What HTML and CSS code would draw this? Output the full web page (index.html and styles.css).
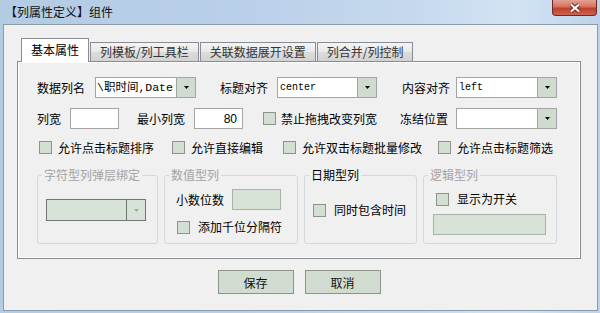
FILE: index.html
```html
<!DOCTYPE html>
<html>

<head>
    <meta charset="utf-8">
    <title>列属性定义</title>
    <link rel="stylesheet" href="styles.css">
</head>

<body>
    <div class="window">
        <div class="titlebar">
            <span class="title">【列属性定义】组件</span>
            <div class="close-btn">
                <svg width="14" height="10" viewBox="0 0 14 10">
                    <path d="M3 1.5 L11 8.5 M11 1.5 L3 8.5" stroke="#6a2f27" stroke-width="4" />
                    <path d="M3 1.5 L11 8.5 M11 1.5 L3 8.5" stroke="#fff" stroke-width="2" />
                </svg>
            </div>
        </div>
        <div class="client">
            <div class="tabs">
                <div class="tab active">基本属性</div>
                <div class="tab">列模板/列工具栏</div>
                <div class="tab">关联数据展开设置</div>
                <div class="tab">列合并/列控制</div>
            </div>
            <div class="panel">
                <!-- 第一行 -->
                <div class="row row-1">
                    <span class="lbl name-lbl">数据列名</span>
                    <div class="combo name-combo">
                        <span class="val wide">\职时间,Date</span>
                        <span class="drop"><svg width="5" height="3"><path d="M0 0h5L2.5 3z" /></svg></span>
                    </div>
                    <span class="lbl title-lbl">标题对齐</span>
                    <div class="combo title-combo">
                        <span class="val">center</span>
                        <span class="drop"><svg width="5" height="3"><path d="M0 0h5L2.5 3z" /></svg></span>
                    </div>
                    <span class="lbl align-lbl">内容对齐</span>
                    <div class="combo align-combo">
                        <span class="val">left</span>
                        <span class="drop"><svg width="5" height="3"><path d="M0 0h5L2.5 3z" /></svg></span>
                    </div>
                </div>
                <!-- 第二行 -->
                <div class="row row-2">
                    <span class="lbl width-lbl">列宽</span>
                    <input class="field width-input" type="text" value="">
                    <span class="lbl min-lbl">最小列宽</span>
                    <input class="field num min-input" type="text" value="80">
                    <span class="check drag-check"><span class="box"></span>禁止拖拽改变列宽</span>
                    <span class="lbl freeze-lbl">冻结位置</span>
                    <div class="combo freeze-combo">
                        <span class="val"></span>
                        <span class="drop"><svg width="5" height="3"><path d="M0 0h5L2.5 3z" /></svg></span>
                    </div>
                </div>
                <!-- 第三行 -->
                <div class="row row-3">
                    <span class="check"><span class="box"></span>允许点击标题排序</span>
                    <span class="check"><span class="box"></span>允许直接编辑</span>
                    <span class="check"><span class="box"></span>允许双击标题批量修改</span>
                    <span class="check"><span class="box"></span>允许点击标题筛选</span>
                </div>
                <!-- 分组 -->
                <div class="groups">
                    <fieldset class="group g-string">
                        <legend class="off">字符型列弹层绑定</legend>
                        <div class="combo disabled">
                            <span class="val"></span>
                            <span class="drop"><svg width="5" height="3"><path d="M0 0h5L2.5 3z" /></svg></span>
                        </div>
                    </fieldset>
                    <fieldset class="group g-number">
                        <legend class="off">数值型列</legend>
                        <div class="line">
                            <span class="lbl">小数位数</span>
                            <span class="field disabled"></span>
                        </div>
                        <span class="check"><span class="box"></span>添加千位分隔符</span>
                    </fieldset>
                    <fieldset class="group g-date">
                        <legend>日期型列</legend>
                        <span class="check"><span class="box"></span>同时包含时间</span>
                    </fieldset>
                    <fieldset class="group g-bool">
                        <legend class="off">逻辑型列</legend>
                        <span class="check"><span class="box"></span>显示为开关</span>
                        <span class="field disabled wide-box"></span>
                    </fieldset>
                </div>
            </div>
            <div class="actions">
                <button>保存</button>
                <button>取消</button>
            </div>
        </div>
    </div>
</body>

</html>
```

FILE: styles.css
```css
* {
    box-sizing: border-box;
}

body {
    margin: 0;
    font-family: "Noto Sans CJK SC", "Liberation Sans", sans-serif;
    font-size: 12px;
    color: #000;
    background: #bcd3eb;
}

.window {
    width: 600px;
    height: 313px;
    display: flex;
    flex-direction: column;
    padding: 0 2px 2px 3px;
    background: linear-gradient(90deg, #b4cbe4 0%, #bad0e9 40%, #c6d9ee 70%, #d3e3f4 86%, #bcd3eb 100%);
}

.titlebar {
    height: 24px;
    display: flex;
    justify-content: space-between;
    align-items: flex-start;
    padding-left: 2px;
}

.title {
    line-height: 24px;
    color: #111;
}

.close-btn {
    width: 45px;
    height: 16px;
    margin-right: 1px;
    border: 1px solid #6b2a22;
    border-top: none;
    border-radius: 0 0 4px 4px;
    background: linear-gradient(#e3a193 0%, #d5735f 45%, #c03e2c 55%, #cc6450 100%);
    display: flex;
    align-items: center;
    justify-content: center;
}

.client {
    flex: 1;
    border: 1px solid #8c9aa8;
    background: #f0f0f0;
    padding: 13px 0 0 13px;
}

/* 选项卡 */
.tabs {
    height: 23px;
    display: flex;
    align-items: flex-end;
    padding-left: 4px;
}

.tab {
    height: 19px;
    padding: 0 9px;
    margin-left: 1px;
    line-height: 17px;
    color: #333;
    border: 1px solid #898c95;
    border-bottom: none;
    background: linear-gradient(#f4f4f4 0%, #e8e8e8 50%, #dcdcdc 51%, #d2d2d2 100%);
}

.tab.active {
    height: 24px;
    margin: 0 0 -1px 0;
    line-height: 21px;
    color: #000;
    background: #fff;
    position: relative;
    z-index: 1;
}

.panel {
    width: 564px;
    border: 1px solid #898c95;
    box-shadow: inset 1px 1px #fff, inset -1px -1px #fff;
    padding: 15px 0 14px 0;
}

.row {
    height: 21px;
    display: flex;
    align-items: center;
}

.lbl {
    line-height: 14px;
    white-space: nowrap;
}

/* 下拉框 */
.combo {
    display: flex;
    height: 21px;
    width: 101px;
    border: 1px solid #a4a4a4;
    background: #fff;
}

.combo .val {
    flex: 1;
    padding-left: 2px;
    line-height: 19px;
    overflow: hidden;
    white-space: nowrap;
    font-family: "Liberation Mono", "Noto Sans CJK SC", monospace;
    font-size: 10px;
}

.combo .val.wide {
    font-size: 11.5px;
    padding-left: 1px;
}

.combo .drop {
    width: 19px;
    border-left: 1px solid #a4a4a4;
    background: #cfdbcf;
    display: flex;
    align-items: center;
    justify-content: center;
}

.combo .drop path {
    fill: #000;
}

.combo.disabled {
    height: 22px;
    width: 100px;
    border-color: #6f786f;
    background: #d7e3d7;
}

.combo.disabled .drop {
    border-left-color: #6f786f;
    background: #d7e3d7;
}

.combo.disabled .drop path {
    fill: #a4a8a4;
}

.field {
    width: 49px;
    height: 21px;
    border: 1px solid #a4a4a4;
    background: #fff;
    padding: 0 5px;
    font-family: "Liberation Sans", sans-serif;
    font-size: 12px;
    outline: none;
}

.field.num {
    text-align: right;
}

.field.disabled {
    display: block;
    border-color: #a8b2a8;
    background: #d7e3d7;
}

.box {
    display: inline-block;
    flex: none;
    width: 13px;
    height: 13px;
    border: 1px solid #8d928d;
    background: #d3dfd3;
}

.check {
    display: inline-flex;
    align-items: center;
    gap: 6px;
    line-height: 14px;
    white-space: nowrap;
}

/* 第一行 */
.name-lbl { margin-left: 19px; }
.name-combo { margin-left: 10px; }
.title-lbl { margin-left: 24px; }
.title-combo { margin-left: 9px; width: 100px; }
.align-lbl { margin-left: 25px; }
.align-combo { margin-left: 6px; }

/* 第二行 */
.row-2 {
    margin-top: 10px;
}

.width-lbl { margin-left: 19px; }
.width-input { margin-left: 9px; }
.min-lbl { margin-left: 18px; }
.min-input { margin-left: 9px; }
.drag-check { margin-left: 20px; gap: 5px; }
.freeze-lbl { margin-left: 23px; }
.freeze-combo { margin-left: 8px; }

/* 第三行 */
.row-3 {
    margin-top: 8px;
}

.row-3 .check:nth-child(1) { margin-left: 21px; }
.row-3 .check:nth-child(2) { margin-left: 18px; }
.row-3 .check:nth-child(3) { margin-left: 20px; }
.row-3 .check:nth-child(4) { margin-left: 16px; }

/* 分组框 */
.groups {
    display: flex;
    gap: 6px;
    margin: 10px 0 0 19px;
}

.group {
    margin: 0;
    padding: 0;
    height: 76px;
    border: 1px solid #d3d8dc;
    border-radius: 3px;
    min-width: 0;
}

.group legend {
    margin-left: 4px;
    padding: 0 2px;
    line-height: 14px;
}

.group legend.off {
    color: #a3a3a3;
}

.g-string { width: 121px; }
.g-number { width: 134px; }
.g-date { width: 113px; }
.g-bool { width: 134px; }

.g-string .combo {
    margin: 17px 0 0 8px;
}

.g-number .line {
    display: flex;
    align-items: center;
    margin: 7px 0 0 11px;
}

.g-number .line .field {
    margin-left: 8px;
}

.g-number .check {
    display: flex;
    margin: 10px 0 0 12px;
    gap: 8px;
}

.g-date .check {
    display: flex;
    margin: 21px 0 0 8px;
    gap: 8px;
}

.g-bool .check {
    display: flex;
    margin: 10px 0 0 12px;
    gap: 8px;
}

.g-bool .wide-box {
    width: 113px;
    margin: 8px 0 0 9px;
}

/* 按钮 */
.actions {
    display: flex;
    justify-content: center;
    gap: 11px;
    margin-top: 11px;
    padding-right: 16px;
}

.actions button {
    width: 76px;
    height: 24px;
    border: 1px solid #8b948b;
    background: #d0dcd0;
    font-family: "Noto Sans CJK SC", sans-serif;
    font-size: 12px;
    color: #111;
    padding: 0;
}
```
